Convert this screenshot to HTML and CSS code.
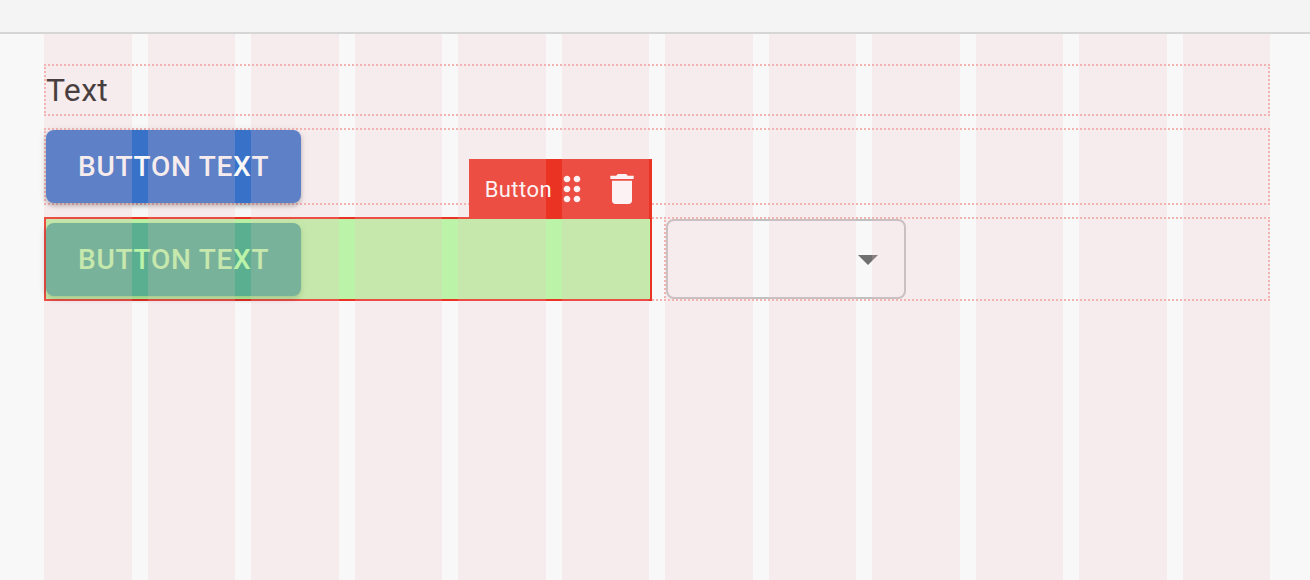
FILE: index.html
```html
<!DOCTYPE html>
<html lang="en">
<head>
<meta charset="utf-8">
<title>Page editor</title>
<link rel="stylesheet" href="styles.css">
</head>
<body>
<header class="toolbar"></header>
<main class="canvas">
  <div class="row"><p class="text">Text</p></div>
  <div class="row"><button class="button" type="button">Button text</button></div>
  <div class="row row-split">
    <section class="cell selected">
      <button class="button" type="button">Button text</button>
      <div class="tag">
        <span class="tag-name">Button</span>
        <div class="tools">
          <button class="tool" type="button" aria-label="Move">
            <svg viewBox="0 0 24 24"><path d="M11 18c0 1.100-.9 2-2 2s-2-.9-2-2 .9-2 2-2 2 .9 2 2zm-2-8c-1.100 0-2 .9-2 2s.9 2 2 2 2-.9 2-2-.9-2-2-2zm0-6c-1.100 0-2 .9-2 2s.9 2 2 2 2-.9 2-2-.9-2-2-2zm6 4c1.100 0 2-.9 2-2s-.9-2-2-2-2 .9-2 2 .9 2 2 2zm0 2c-1.100 0-2 .9-2 2s.9 2 2 2 2-.9 2-2-.9-2-2-2zm0 6c-1.100 0-2 .9-2 2s.9 2 2 2 2-.9 2-2-.9-2-2-2z"/></svg>
          </button>
          <button class="tool" type="button" aria-label="Delete">
            <svg viewBox="0 0 24 24"><path d="M6 19c0 1.100.9 2 2 2h8c1.100 0 2-.9 2-2V7H6v12zM19 4h-3.500l-1-1h-5l-1 1H5v2h14V4z"/></svg>
          </button>
        </div>
      </div>
    </section>
    <section class="cell select-cell">
      <div class="select-box">
        <select class="select" aria-label="Select"><option value=""></option></select>
        <svg class="arrow" viewBox="0 0 24 24"><path d="M7 10l5 5 5-5z"/></svg>
      </div>
    </section>
  </div>
  <div class="columns" aria-hidden="true">
    <i></i><i></i><i></i><i></i><i></i><i></i><i></i><i></i><i></i><i></i><i></i><i></i>
  </div>
</main>
</body>
</html>
```

FILE: styles.css
```css
* { box-sizing: border-box; }

body {
  display: flex;
  flex-direction: column;
  min-height: 100vh;
  margin: 0;
  background: #f8f8f8;
  font-family: Roboto, "Liberation Sans", sans-serif;
}

.toolbar {
  height: 34px;
  background: #f4f4f4;
  border-bottom: 2px solid #d6d6d6;
}

.canvas {
  position: relative;
  flex: 1;
  display: flex;
  flex-direction: column;
  gap: 12px;
  padding: 30px 40px 30px 44px;
}

.row { border: 2px dotted #f1b2b0; }

.text {
  margin: 0;
  font-size: 32px;
  line-height: 48px;
  letter-spacing: 0.01em;
  color: #1f1f1f;
}

.button {
  display: block;
  height: 73px;
  padding: 0 32px;
  border: 0;
  border-radius: 8px;
  background: #3771c8;
  color: #f8f8f8;
  font: 500 28px/48px Roboto, "Liberation Sans", sans-serif;
  letter-spacing: 0.027em;
  text-transform: uppercase;
  box-shadow: 0 3px 4px rgba(0, 0, 0, 0.24), 0 1px 8px rgba(0, 0, 0, 0.12);
}

.row-split {
  display: grid;
  grid-template-columns: 1fr 1fr;
  gap: 14px;
}

.cell { margin: -2px; }

.selected {
  position: relative;
  border: 2px solid #ea3323;
  padding: 4px 0 3px;
}

.selected::after {
  content: "";
  position: absolute;
  inset: 0;
  background: rgba(126, 238, 88, 0.5);
}

.tag {
  position: absolute;
  z-index: 1;
  right: -2px;
  bottom: 100%;
  display: flex;
  align-items: center;
  height: 60px;
  padding: 0 10px 0 16px;
  background: #ea3323;
  color: #fff;
}

.tag-name {
  font-size: 22px;
  letter-spacing: 0.02em;
}

.tools {
  display: flex;
  gap: 10px;
}

.tool {
  width: 40px;
  height: 40px;
  padding: 0;
  border: 0;
  background: none;
}

.tool svg {
  display: block;
  fill: #fff;
}

.select-cell {
  margin-left: 0;
  border: 2px solid transparent;
  border-left: 2px dotted #f1b2b0;
}

.select-box {
  position: relative;
  width: 240px;
  height: 80px;
}

.select {
  width: 100%;
  height: 100%;
  appearance: none;
  border: 2px solid #c1c1c1;
  border-radius: 8px;
  background: transparent;
  font: 32px Roboto, "Liberation Sans", sans-serif;
}

.arrow {
  position: absolute;
  top: 16px;
  right: 14px;
  width: 48px;
  height: 48px;
  fill: #707070;
  pointer-events: none;
}

.columns {
  position: absolute;
  z-index: 2;
  inset: 0 40px 0 44px;
  display: grid;
  grid-template-columns: repeat(12, 1fr);
  gap: 16px;
  pointer-events: none;
}

.columns i { background: rgba(243, 188, 196, 0.2); }
```
